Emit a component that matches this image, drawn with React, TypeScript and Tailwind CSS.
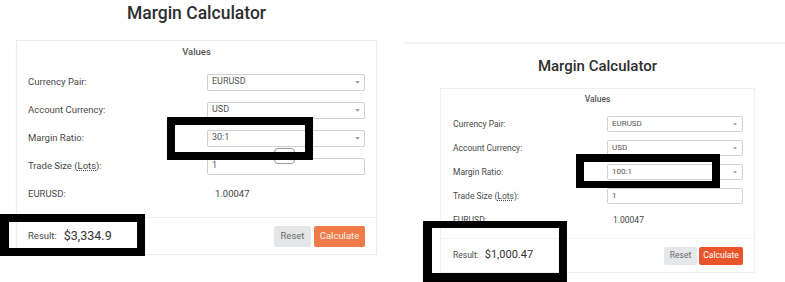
import React from "react";

const Caret = ({ w = 5, h = 3 }: { w?: number; h?: number }) => (
  <svg width={w} height={h} viewBox="0 0 6 4" className="shrink-0">
    <path d="M0 0h6L3 3.6z" fill="#9b9b9b" />
  </svg>
);

function Field({
  value,
  select,
  big,
}: {
  value: string;
  select?: boolean;
  big: boolean;
}) {
  return (
    <div
      className={
        big
          ? "flex-1 h-[17px] border border-[#cfcfcf] rounded-[2px] bg-white flex items-center justify-between pl-[4px] pr-[4px] text-[9px] text-[#555]"
          : "flex-1 h-[16px] border border-[#d2d2d2] rounded-[2px] bg-white flex items-center justify-between pl-[4px] pr-[5px] text-[8px] text-[#555]"
      }
    >
      <span>{value}</span>
      {select ? <Caret w={big ? 5 : 4} h={3} /> : null}
    </div>
  );
}

function Row({
  label,
  children,
  big,
}: {
  label: React.ReactNode;
  children: React.ReactNode;
  big: boolean;
}) {
  return (
    <div className={big ? "h-[28px] flex items-center" : "h-[24px] flex items-center"}>
      <div
        className={
          big
            ? "w-[179px] shrink-0 text-[9.5px] text-[#4a4a4a]"
            : "w-[154px] shrink-0 text-[8.5px] text-[#4a4a4a]"
        }
      >
        {label}
      </div>
      {children}
    </div>
  );
}

function Calculator({ big, ratio, result }: { big: boolean; ratio: string; result: string }) {
  return (
    <div
      className={
        big
          ? "w-[361px] border border-[#ececec] bg-white shadow-[0_0_2px_rgba(0,0,0,0.04)]"
          : "w-[315px] border border-[#f0f0f0] bg-white"
      }
    >
      <div
        className={
          big
            ? "h-[22px] flex items-center justify-center text-[9.5px] font-medium text-[#555]"
            : "h-[20px] flex items-center justify-center text-[8.5px] font-medium text-[#555]"
        }
      >
        Values
      </div>
      <div className={big ? "pt-[5px] pb-[9px] pl-[11px] pr-[11px]" : "pt-[3px] pb-[6px] pl-[12px] pr-[11px]"}>
        <Row label="Currency Pair:" big={big}>
          <Field value="EURUSD" select big={big} />
        </Row>
        <Row label="Account Currency:" big={big}>
          <Field value="USD" select big={big} />
        </Row>
        <Row label="Margin Ratio:" big={big}>
          <Field value={ratio} select big={big} />
        </Row>
        <Row
          label={
            <span>
              Trade Size (<span className="underline decoration-dotted">Lots</span>):
            </span>
          }
          big={big}
        >
          <Field value="1" big={big} />
        </Row>
        <Row label="EURUSD:" big={big}>
          <div className={big ? "pl-[8px] text-[9.5px] text-[#444]" : "pl-[6px] text-[8.5px] text-[#444]"}>
            1.00047
          </div>
        </Row>
      </div>
      <div
        className={
          big
            ? "h-[37px] border-t border-[#efefef] flex items-center justify-between pl-[11px] pr-[11px]"
            : "h-[34px] border-t border-[#f3f3f3] flex items-center justify-between pl-[12px] pr-[11px]"
        }
      >
        <div className="flex items-center">
          <span className={big ? "text-[9.5px] text-[#4a4a4a]" : "text-[8.5px] text-[#4a4a4a]"}>Result:</span>
          <span className={big ? "ml-[7px] text-[12.5px] text-[#333]" : "ml-[6px] text-[11px] text-[#333]"}>
            {result}
          </span>
        </div>
        <div className={big ? "flex gap-[3px]" : "flex gap-[2px]"}>
          <div
            className={
              big
                ? "w-[37px] h-[21px] rounded-[2px] bg-[#e4e6e8] flex items-center justify-center text-[9.5px] text-[#6b6b6b]"
                : "w-[33px] h-[18px] rounded-[2px] bg-[#e5e7e9] flex items-center justify-center text-[8.5px] text-[#6b6b6b]"
            }
          >
            Reset
          </div>
          <div
            className={
              big
                ? "w-[51px] h-[21px] rounded-[2px] bg-[#f07a48] flex items-center justify-center text-[9.5px] text-[#fff3ec]"
                : "w-[44px] h-[18px] rounded-[2px] bg-[#e9552b] flex items-center justify-center text-[8.5px] text-white"
            }
          >
            Calculate
          </div>
        </div>
      </div>
    </div>
  );
}

export default function App() {
  return (
    <div className="relative w-[785px] h-[282px] bg-white overflow-hidden flex font-['Roboto',_'Liberation_Sans',_sans-serif]">
      {/* Left screenshot */}
      <div className="w-[400px] shrink-0 pl-[16px] pt-[2px]">
        <div className="w-[361px] h-[22px] leading-[22px] text-center text-[17.5px] font-medium text-[#2e2e2e]">
          Margin Calculator
        </div>
        <div className="mt-[16px]">
          <Calculator big ratio="30:1" result="$3,334.9" />
        </div>
      </div>

      {/* Right screenshot */}
      <div className="flex-1 pt-[42px]">
        <div className="h-[2px] bg-[#f3f3f3] ml-[4px]" />
        <div className="ml-[40px] mt-[13px] w-[315px] h-[18px] leading-[18px] text-center text-[15px] font-medium text-[#2e2e2e]">
          Margin Calculator
        </div>
        <div className="ml-[40px] mt-[13px]">
          <Calculator big={false} ratio="100:1" result="$1,000.47" />
        </div>
      </div>

      {/* Annotation overlays */}
      <div className="absolute left-[274px] top-[148px] w-[21px] h-[16px] rounded-[4px] border border-[#9a9a9a]" />
      <div className="absolute left-[167px] top-[117px] w-[146px] h-[43px] border-[8px] border-black" />
      <div className="absolute left-0 top-[214px] w-[145px] h-[42px] border-[8px] border-l-[9px] border-black" />
      <div className="absolute left-[576px] top-[154px] w-[144px] h-[34px] border-[8px] border-b-[7px] border-black" />
      <div className="absolute left-[423px] top-[221px] w-[144px] h-[61px] border-[8px] border-l-[9px] border-t-[7px] border-b-[9px] border-black" />
    </div>
  );
}
